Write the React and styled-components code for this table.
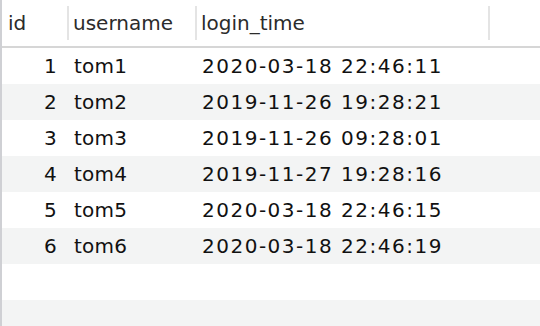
import React from 'react';
import styled, { createGlobalStyle } from 'styled-components';

const rows = [
  { id: 1, username: 'tom1', login: '2020-03-18 22:46:11' },
  { id: 2, username: 'tom2', login: '2019-11-26 19:28:21' },
  { id: 3, username: 'tom3', login: '2019-11-26 09:28:01' },
  { id: 4, username: 'tom4', login: '2019-11-27 19:28:16' },
  { id: 5, username: 'tom5', login: '2020-03-18 22:46:15' },
  { id: 6, username: 'tom6', login: '2020-03-18 22:46:19' },
];

const Global = createGlobalStyle`
  html, body {
    margin: 0;
    padding: 0;
    background: #fff;
    overflow: hidden;
  }
  body {
    font-family: "DejaVu Sans", "Noto Sans", sans-serif;
  }
`;

const Page = styled.div`
  display: flex;
  width: 540px;
  height: 326px;
  overflow: hidden;
`;

const Strip = styled.div`
  width: 2px;
  flex: none;
  background: #cfd0d4;
`;

const Table = styled.div`
  flex: 1;
  display: flex;
  flex-direction: column;
`;

const cols = '65px 128px 293px 1fr';

const HeaderRow = styled.div`
  display: grid;
  grid-template-columns: ${cols};
  flex: none;
  height: 48px;
  box-sizing: border-box;
  border-bottom: 2px solid #d6d6d6;
`;

const HeadCell = styled.div`
  display: flex;
  align-items: center;
  margin: 6px 0;
  padding-left: ${p => (p.$first ? '6px' : '4px')};
  border-left: ${p => (p.$first ? 'none' : '2px solid #e4e4e4')};
  font-size: 20px;
  color: #2b2b2b;
`;

const Row = styled.div`
  display: grid;
  grid-template-columns: ${cols};
  flex: none;
  height: 36px;
  background: ${p => (p.$alt ? '#f3f4f4' : '#fff')};
`;

const Cell = styled.div`
  display: flex;
  align-items: center;
  justify-content: ${p => (p.$num ? 'flex-end' : 'flex-start')};
  padding: ${p => (p.$num ? '0 10px 0 0' : '0 0 0 7px')};
  font-size: 20px;
  color: #111;
  white-space: nowrap;
  letter-spacing: ${p => (p.$wide ? '1.5px' : '0.2px')};
`;

export default function App() {
  const blanks = [0, 1];
  return (
    <Page>
      <Global />
      <Strip />
      <Table>
        <HeaderRow>
          <HeadCell $first>id</HeadCell>
          <HeadCell>username</HeadCell>
          <HeadCell>login_time</HeadCell>
          <HeadCell />
        </HeaderRow>
        {rows.map((r, i) => (
          <Row key={r.id} $alt={i % 2 === 1}>
            <Cell $num>{r.id}</Cell>
            <Cell>{r.username}</Cell>
            <Cell $wide>{r.login}</Cell>
            <Cell />
          </Row>
        ))}
        {blanks.map(b => (
          <Row key={'b' + b} $alt={b % 2 === 1} />
        ))}
      </Table>
    </Page>
  );
}
